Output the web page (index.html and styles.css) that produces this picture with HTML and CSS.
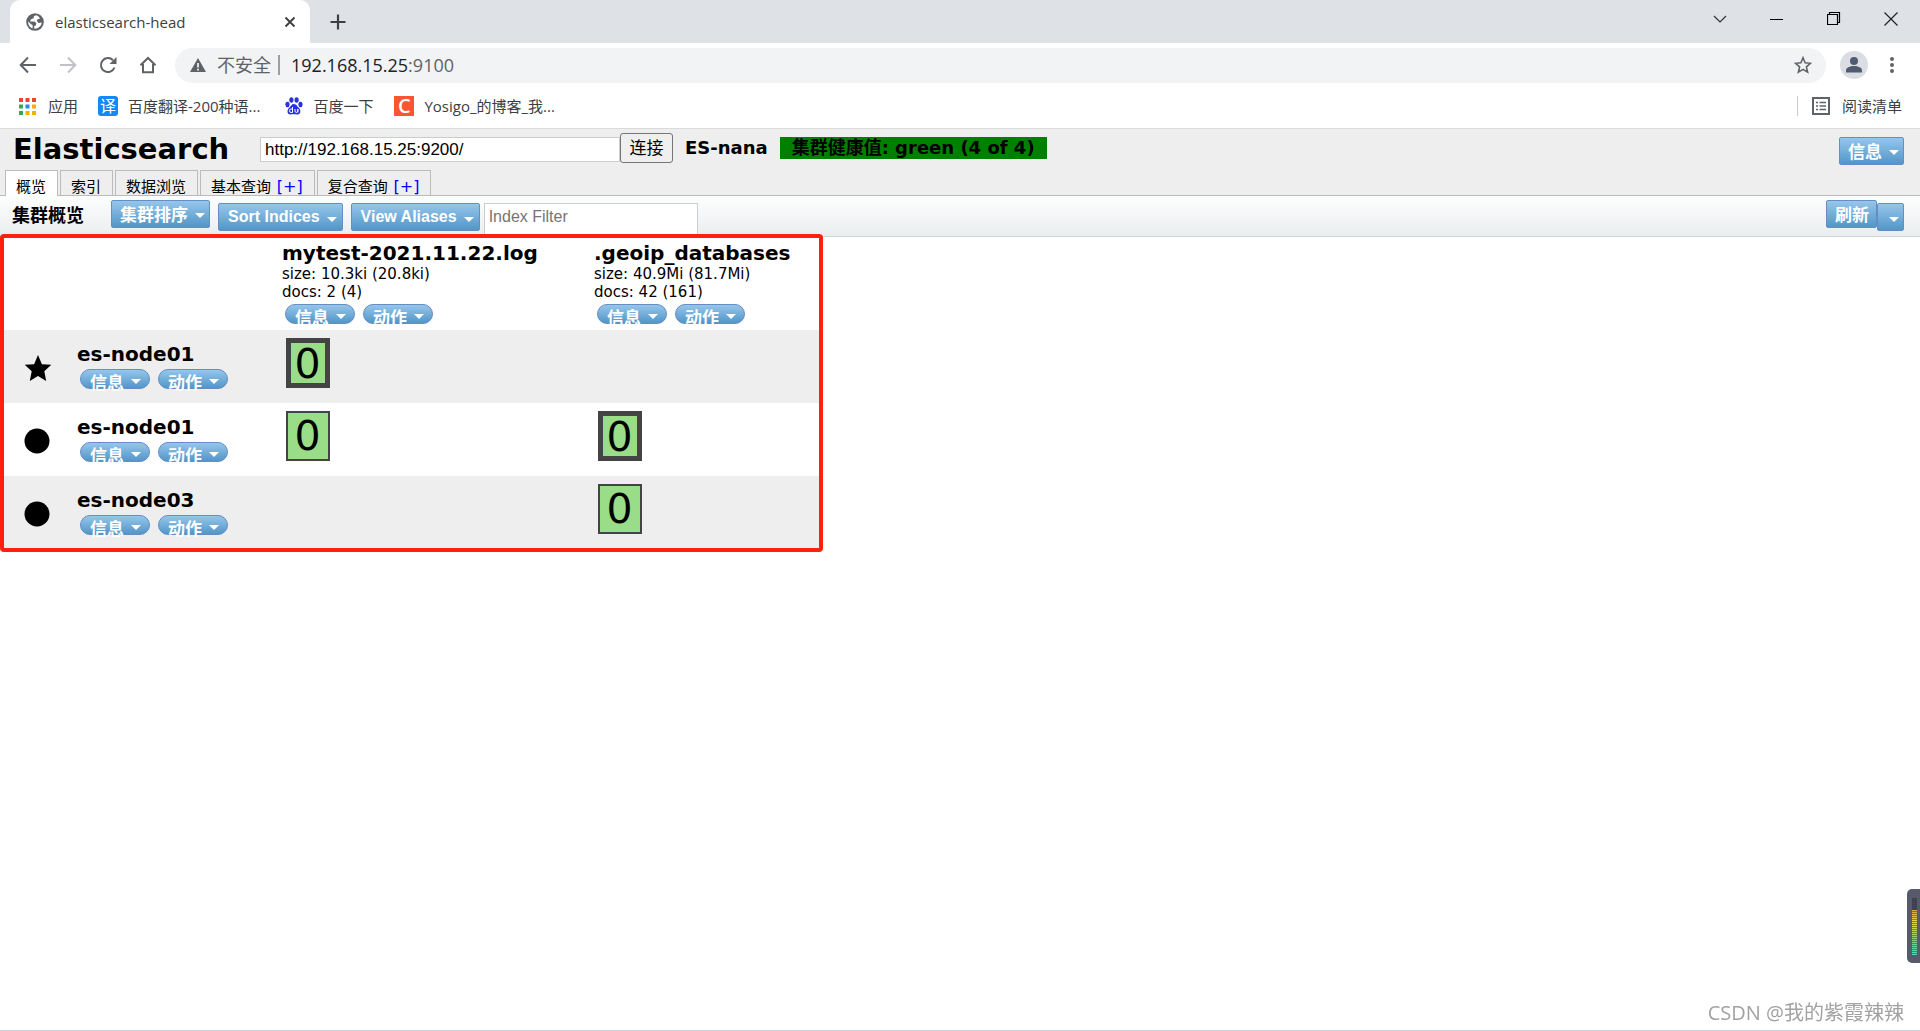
FILE: index.html
```html
<!DOCTYPE html>
<html lang="zh-CN">
<head>
<meta charset="utf-8">
<title>elasticsearch-head</title>
<link rel="stylesheet" href="styles.css">
</head>
<body>
<header class="browser">
  <div class="tabstrip">
    <div class="tab">
      <svg class="globe" viewBox="0 0 18 18" width="18" height="18"><circle cx="9" cy="9" r="8.8" fill="#5f6368"/><path d="M10.5 2.2 8 3 7.6 5.2 5 6.2 4 8.4h4.6l1.8 1.8-.6 2.2-1.6.6v2.6C12 16 15.600 13 15.700 9.500l-3.200.6-1.700-2 .5-1.600 2.700-1C13.200 3.800 12 2.800 10.500 2.200Z" fill="#fff"/><path d="M2.200 8.600 5 11.200 6.600 12v3.400C4 14.600 2 12 2.200 8.600Z" fill="#fff"/></svg>
      <span class="tab-title">elasticsearch-head</span>
      <button class="plain" aria-label="关闭标签页"><svg viewBox="0 0 12 12" width="12" height="12"><path d="M1.500 1.500l9 9M10.500 1.500l-9 9" stroke="#3c4043" stroke-width="1.900"/></svg></button>
    </div>
    <button class="plain new-tab" aria-label="新标签页"><svg viewBox="0 0 16 16" width="16" height="16"><path d="M8 .5v15M.5 8h15" stroke="#3c4043" stroke-width="2.200"/></svg></button>
    <div class="window-buttons">
      <button class="plain" aria-label="搜索标签页"><svg viewBox="0 0 14 14" width="14" height="14"><path d="M1 4l6 6 6-6" fill="none" stroke="#333" stroke-width="1.200"/></svg></button>
      <button class="plain" aria-label="最小化"><svg viewBox="0 0 14 14" width="14" height="14"><path d="M0 7.500h13" stroke="#000"/></svg></button>
      <button class="plain" aria-label="还原"><svg viewBox="0 0 14 14" width="14" height="14"><path d="M.5 2.500h10v10H.5zM2.500 2.500v-2h10v10h-2" fill="none" stroke="#000" stroke-width="1.200"/></svg></button>
      <button class="plain" aria-label="关闭"><svg viewBox="0 0 14 14" width="14" height="14"><path d="M.5.5l13 13M13.500.5l-13 13" stroke="#222" stroke-width="1.200"/></svg></button>
    </div>
  </div>
  <div class="navbar">
    <button class="plain" aria-label="后退"><svg viewBox="0 0 18 18" width="18" height="18"><path d="M17 9H2M9 1.500 1.700 9 9 16.500" fill="none" stroke="#5f6368" stroke-width="2"/></svg></button>
    <button class="plain" aria-label="前进"><svg viewBox="0 0 18 18" width="18" height="18"><path d="M1 9h15M9 1.500 16.300 9 9 16.500" fill="none" stroke="#c0c2c5" stroke-width="2"/></svg></button>
    <button class="plain" aria-label="重新加载"><svg viewBox="0 0 18 18" width="18" height="18"><path d="M15.500 11.500A7 7 0 1 1 14 4.200" fill="none" stroke="#5f6368" stroke-width="2"/><path d="M17.500 1v7h-7z" fill="#5f6368"/></svg></button>
    <button class="plain" aria-label="主页"><svg viewBox="0 0 18 18" width="18" height="18"><path d="M1.500 9.300 9 2l7.500 7.300M4 8v8.200h10V8" fill="none" stroke="#5f6368" stroke-width="2"/></svg></button>
    <div class="omnibox">
      <svg viewBox="0 0 16 14" width="16" height="14"><path d="M8 0l8 14H0z" fill="#5f6368"/><path d="M8 5v4.500M8 10.800v1.600" stroke="#fff" stroke-width="1.600"/></svg>
      <span class="insecure">不安全</span>
      <span class="divider"></span>
      <span class="url">192.168.15.25<span class="port">:9100</span></span>
      <button class="plain star" aria-label="为此标签页添加书签"><svg viewBox="0 0 18 18" width="18" height="18"><path d="M9 1.800l2.100 5 5.400.5-4.100 3.600 1.200 5.300L9 13.400l-4.600 2.800 1.200-5.300L1.500 7.300l5.400-.5z" fill="none" stroke="#5f6368" stroke-width="1.600"/></svg></button>
    </div>
    <button class="plain avatar" aria-label="用户"><svg viewBox="0 0 28 28" width="28" height="28"><circle cx="14" cy="14" r="14" fill="#dadde3"/><circle cx="14" cy="10" r="4" fill="#4f5b70"/><path d="M6 21.500v-2.200c0-2.700 4-4.300 8-4.300s8 1.600 8 4.300v2.200z" fill="#4f5b70"/></svg></button>
    <button class="plain" aria-label="菜单"><svg viewBox="0 0 4 16" width="4" height="16"><g fill="#5f6368"><circle cx="2" cy="2" r="2"/><circle cx="2" cy="8" r="2"/><circle cx="2" cy="14" r="2"/></g></svg></button>
  </div>
  <nav class="bookmarks">
    <a class="apps" href="#"><svg viewBox="0 0 17 17" width="17" height="17"><path d="M0 0h4v4H0zM6.500 0h4v4h-4zM13 0h4v4h-4z" fill="#ea4335"/><path d="M0 6.500h4v4H0zM0 13h4v4H0z" fill="#34a853"/><path d="M6.500 6.500h4v4h-4z" fill="#1a90f0"/><path d="M13 6.500h4v4h-4zM13 13h4v4h-4zM6.500 13h4v4h-4z" fill="#fbae05"/></svg>应用</a>
    <a class="translate" href="#"><span class="fav fav-blue">译</span>百度翻译-200种语...</a>
    <a class="baidu" href="#"><svg viewBox="0 0 18 18" width="18" height="18"><g fill="#2932e1"><ellipse cx="2.500" cy="7.500" rx="2.100" ry="2.700"/><ellipse cx="6.400" cy="3" rx="2.100" ry="2.800"/><ellipse cx="11.600" cy="3" rx="2.100" ry="2.800"/><ellipse cx="15.500" cy="7.500" rx="2.100" ry="2.700"/><path d="M9 7c2.500 0 3 2.300 5 4s2 6.500-1.500 6.500c-2 0-5-.3-7 0C2 17.800 1.800 13 4 11s2.500-4 5-4z"/></g><path d="M7.500 10v5.500H6.200a1.400 1.400 0 0 1 0-3.500h1.300M10 12v2.200c0 1.600 2.800 1.600 2.800 0V12v3.500" fill="none" stroke="#fff"/></svg>百度一下</a>
    <a class="blog" href="#"><span class="fav fav-orange">C</span>Yosigo_的博客_我...</a>
    <a class="reading" href="#"><svg viewBox="0 0 18 18" width="18" height="18"><path d="M1 1h16v16H1z" fill="none" stroke="#5f6368" stroke-width="2"/><path d="M4 5.500h2M4 9h2M4 12.500h2M7.500 5.500H14M7.500 9H14M7.500 12.500H14" stroke="#5f6368" stroke-width="1.600"/></svg>阅读清单</a>
  </nav>
</header>

<div class="es-header">
  <form class="connect">
    <h1>Elasticsearch</h1>
    <input class="host" type="text" aria-label="集群地址" value="http://192.168.15.25:9200/">
    <button class="connect-button" type="button">连接</button>
    <span class="cluster-name">ES-nana</span>
    <span class="health">集群健康值: green (4 of 4)</span>
    <button class="btn btn-raised info" type="button">信息<i class="caret"></i></button>
  </form>
  <nav class="es-tabs">
    <a class="es-tab active" href="#">概览</a>
    <a class="es-tab" href="#">索引</a>
    <a class="es-tab" href="#">数据浏览</a>
    <a class="es-tab" href="#">基本查询 <span class="plus">[+]</span></a>
    <a class="es-tab" href="#">复合查询 <span class="plus">[+]</span></a>
  </nav>
</div>

<div class="toolbar">
  <h2>集群概览</h2>
  <button class="btn btn-raised" type="button">集群排序<i class="caret"></i></button>
  <button class="btn" type="button">Sort Indices<i class="caret"></i></button>
  <button class="btn" type="button">View Aliases<i class="caret"></i></button>
  <input class="filter" type="text" placeholder="Index Filter" aria-label="Index Filter">
  <div class="refresh">
    <button class="btn btn-raised" type="button">刷新</button>
    <button class="btn btn-more" type="button" aria-label="刷新选项"><i class="caret"></i></button>
  </div>
</div>

<main class="overview">
  <table class="nodes">
    <thead>
      <tr>
        <th class="col-mark"></th>
        <th class="col-node"></th>
        <th class="col-index">
          <h3>mytest-2021.11.22.log</h3>
          <div>size: 10.3ki (20.8ki)</div>
          <div>docs: 2 (4)</div>
          <div class="pills"><button class="pill" type="button">信息<i class="caret"></i></button><button class="pill" type="button">动作<i class="caret"></i></button></div>
        </th>
        <th class="col-last">
          <h3>.geoip_databases</h3>
          <div>size: 40.9Mi (81.7Mi)</div>
          <div>docs: 42 (161)</div>
          <div class="pills"><button class="pill" type="button">信息<i class="caret"></i></button><button class="pill" type="button">动作<i class="caret"></i></button></div>
        </th>
      </tr>
    </thead>
    <tbody>
      <tr>
        <td class="mark"><svg viewBox="0 0 28 26" width="28" height="26"><path d="M14 0l3.900 9.200 9.400.6-7 6.500 1.900 9.700-8.200-5-8.200 5 1.900-9.700-7-6.500 9.400-.6z"/></svg></td>
        <td><h3>es-node01</h3><div class="pills"><button class="pill" type="button">信息<i class="caret"></i></button><button class="pill" type="button">动作<i class="caret"></i></button></div></td>
        <td><button class="shard primary" type="button">0</button></td>
        <td></td>
      </tr>
      <tr>
        <td class="mark"><svg viewBox="0 0 26 26" width="26" height="26"><circle cx="13" cy="13" r="12.500"/></svg></td>
        <td><h3>es-node01</h3><div class="pills"><button class="pill" type="button">信息<i class="caret"></i></button><button class="pill" type="button">动作<i class="caret"></i></button></div></td>
        <td><button class="shard" type="button">0</button></td>
        <td><button class="shard primary" type="button">0</button></td>
      </tr>
      <tr>
        <td class="mark"><svg viewBox="0 0 26 26" width="26" height="26"><circle cx="13" cy="13" r="12.500"/></svg></td>
        <td><h3>es-node03</h3><div class="pills"><button class="pill" type="button">信息<i class="caret"></i></button><button class="pill" type="button">动作<i class="caret"></i></button></div></td>
        <td></td>
        <td><button class="shard" type="button">0</button></td>
      </tr>
    </tbody>
  </table>
  <div class="highlight"></div>
</main>

<div class="meter"><div class="meter-bars"></div></div>
<div class="watermark">CSDN @我的紫霞辣辣</div>
</body>
</html>
```
FILE: styles.css
```css
* { box-sizing: border-box; }
body {
  margin: 0;
  min-height: 100vh;
  background: #fff;
  border-bottom: 1px solid #c9d9de;
  color: #000;
  font-family: "DejaVu Sans", "Noto Sans CJK SC", sans-serif;
  font-size: 15px;
}
h1, h2, h3 { margin: 0; font-weight: bold; }
button, input { font: inherit; margin: 0; }
a { color: inherit; text-decoration: none; }
svg { display: block; flex: none; }
.plain { display: flex; flex: none; padding: 0; border: 0; background: none; }

/* browser frame */
.browser {
  font-family: "Open Sans", "Noto Sans CJK SC", sans-serif;
  color: #3c4043;
  border-bottom: 1px solid #dadbdc;
}
.tabstrip { display: flex; height: 43px; padding-left: 10px; background: #dee1e6; }
.tab {
  display: flex;
  align-items: center;
  width: 300px;
  padding: 0 14px 0 16px;
  background: #fff;
  border-radius: 10px 10px 0 0;
}
.tab-title { flex: 1; margin-left: 11px; font-size: 15px; line-height: 20px; }
.new-tab { align-self: center; margin-left: 20px; }
.window-buttons { display: flex; align-items: center; gap: 43px; height: 37px; margin-left: auto; padding-right: 22px; }
.navbar { display: flex; align-items: center; gap: 22px; height: 44px; padding: 0 26px 0 19px; }
.omnibox {
  display: flex;
  align-items: center;
  flex: 1;
  height: 35px;
  padding: 0 14px 0 15px;
  border-radius: 18px;
  background: #f1f3f4;
  font-size: 18px;
  line-height: 24px;
}
.navbar .omnibox { margin: 0 -8px 0 -4px; }
.insecure { margin-left: 11px; color: #5f6368; }
.divider { width: 2px; height: 20px; margin: 0 11px 0 7px; background: #9aa0a6; }
.url { color: #202124; }
.port { color: #5f6368; }
.star { margin-left: auto; }
.bookmarks { display: flex; align-items: center; height: 41px; padding: 0 18px 3px 19px; font-size: 15px; line-height: 20px; }
.bookmarks a { display: flex; align-items: center; gap: 10px; white-space: nowrap; }
.bookmarks .apps { gap: 12px; margin-right: 20px; }
.translate { margin-right: 25px; }
.baidu { margin-right: 21px; }
.bookmarks .reading { gap: 12px; margin-left: auto; padding-left: 14px; border-left: 1px solid #c8cacd; }
.fav { width: 20px; height: 20px; color: #fff; text-align: center; line-height: 20px; }
.fav-blue { border-radius: 3px; background: #1488f5; font-size: 16px; }
.fav-orange { background: #fc5531; font-size: 20px; font-weight: 600; }

/* cluster header */
.es-header { background: #eee; border-bottom: 1px solid #bbb; }
.connect { display: flex; align-items: flex-start; height: 41px; padding: 4px 16px 0 13px; }
h1 { width: 247px; font-size: 29px; line-height: 32px; }
.host {
  width: 360px;
  height: 25px;
  margin-top: 4px;
  padding: 0 4px;
  border: 1px solid #ccc;
  background: #fff;
  font-family: "Liberation Sans", sans-serif;
  font-size: 17px;
}
.connect-button {
  width: 53px;
  height: 30px;
  padding: 0;
  border: 1px solid #767676;
  border-radius: 3px;
  background: #efefef;
  font-size: 17px;
  line-height: 28px;
}
.cluster-name, .health { margin-top: 4px; font-size: 18px; font-weight: bold; line-height: 22px; white-space: nowrap; }
.cluster-name { margin-left: 12px; }
.health { margin-left: 12px; padding: 0 12px; background: green; }
.connect .info { margin: 4px 0 0 auto; }
.es-tabs { display: flex; gap: 2px; padding-left: 5px; }
.es-tab {
  height: 25px;
  padding: 0 11px 0 10px;
  border: 1px solid #bbb;
  border-bottom: 0;
  line-height: 32px;
  white-space: nowrap;
}
.es-tab.active { height: 26px; margin-bottom: -1px; background: #fff; }
.plus { margin-left: 1px; color: #00f; font-size: 16px; }

/* blue buttons */
.btn, .pill {
  display: flex;
  flex: none;
  align-items: center;
  border: 1px solid #668dc6;
  background: linear-gradient(#96c6eb, #5296c7);
  color: #fff;
  font-family: "Liberation Sans", "Noto Sans CJK SC", sans-serif;
  font-weight: bold;
  white-space: nowrap;
}
.btn { height: 28px; padding: 0 5px 0 9px; border-radius: 2px; font-size: 16px; line-height: 26px; }
.btn-raised { padding: 3px 4px 0 8px; font-size: 17px; line-height: 22px; }
.caret { margin: 4px 0 0 7px; border: 5px solid transparent; border-top-color: #fff; border-bottom: 0; }
.btn-raised .caret { margin-top: 0; }

/* page toolbar */
.toolbar {
  display: flex;
  height: 41px;
  padding: 7px 16px 0 12px;
  border-bottom: 1px solid #ced3d6;
  background: linear-gradient(#fdfefe, #eaedef);
}
.toolbar h2 { margin-right: 27px; font-size: 18px; line-height: 26px; }
.toolbar .btn { margin-right: 8px; }
.toolbar .btn-raised { margin-top: -3px; }
.toolbar .filter {
  width: 214px;
  height: 33px;
  margin-left: -4px;
  padding: 0 4px 6px;
  border: 1px solid #ccc;
  border-bottom: 0;
  font-family: "Liberation Sans", sans-serif;
  font-size: 16px;
}
.filter::placeholder { color: #757575; }
.refresh { display: flex; margin-left: auto; }
.toolbar .refresh .btn { margin-right: 0; }
.refresh .btn-raised { padding-right: 7px; }
.refresh .btn-more { padding: 0 4px; }

/* node table */
.overview { position: relative; width: max-content; padding: 0 4px 3px 3px; }
.nodes { border-collapse: collapse; table-layout: fixed; width: 816px; }
.nodes th, .nodes td { padding: 0; text-align: left; vertical-align: top; font-weight: normal; }
.nodes th { height: 93px; padding-top: 4px; line-height: 18px; }
.nodes td { height: 73px; padding-top: 12px; }
.nodes tbody tr:nth-child(odd) { background: #eee; }
.col-mark { width: 74px; }
.col-node { width: 205px; }
.col-index { width: 312px; }
.nodes h3 { font-size: 20px; line-height: 24px; }
.nodes .mark { padding: 25px 0 0 21px; }
.pills { display: flex; gap: 8px; padding: 3px 0 0 3px; }
.pill {
  align-items: flex-start;
  width: 70px;
  height: 20px;
  padding: 4px 0 0 9px;
  border-radius: 10px;
  font-size: 17px;
  line-height: 20px;
}
.pill .caret { margin-top: 5px; }
.shard {
  display: block;
  width: 44px;
  height: 50px;
  margin: -4px 0 0 4px;
  padding: 0 1px 0 0;
  border: 2px solid #444;
  background: #9d8;
  font-size: 41px;
  line-height: 46px;
}
.shard.primary { border-width: 5px; line-height: 42px; }
.highlight { position: absolute; inset: -3px 0 0; border: 4px solid #ff2010; border-radius: 4px; pointer-events: none; }

/* floating items */
.meter {
  position: fixed;
  right: 0;
  bottom: 68px;
  width: 13px;
  height: 74px;
  padding: 9px 3px 8px 5px;
  border-radius: 5px 0 0 5px;
  background: #565a6a;
}
.meter-bars {
  height: 57px;
  background:
    repeating-linear-gradient(transparent 0 1px, rgba(70, 75, 90, .6) 1px 2px),
    linear-gradient(#3b3f50 0 12px, #e09a50 12px, #e6d04c 22px, #c0d850 32px, #86cc74 42px, #48d8bc);
}
.watermark {
  position: fixed;
  right: 16px;
  bottom: 4px;
  color: #a2a2a2;
  font-family: "Open Sans", "Noto Sans CJK SC", sans-serif;
  font-size: 20px;
  line-height: 28px;
}
```
